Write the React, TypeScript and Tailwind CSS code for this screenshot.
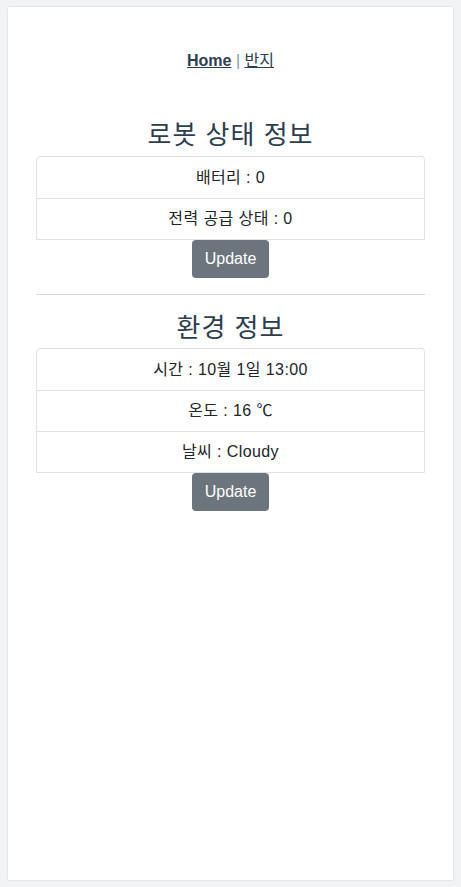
import React, { useState } from "react";

const font = { fontFamily: '"Liberation Sans", "Noto Sans CJK KR", sans-serif' };

type Row = { label: string; value: string };

const InfoTable: React.FC<{ rows: Row[] }> = ({ rows }) => (
  <ul className="border border-[#dee2e6] rounded-[4px] rounded-b-none">
    {rows.map((r, i) => (
      <li
        key={i}
        className={
          "h-[41px] flex items-center justify-center text-[16px] tracking-[0.4px] text-[#212529] " +
          (i > 0 ? "border-t border-[#dee2e6]" : "")
        }
      >
        {r.label} : {r.value}
      </li>
    ))}
  </ul>
);

const UpdateButton: React.FC<{ onClick: () => void }> = ({ onClick }) => (
  <div className="flex justify-center">
    <button
      onClick={onClick}
      className="w-[77px] h-[38px] bg-[#6c757d] text-white text-[16px] rounded-[4px]"
    >
      Update
    </button>
  </div>
);

export default function App() {
  const [robot, setRobot] = useState({ battery: 0, power: 0 });
  const [env] = useState({ time: "10월 1일 13:00", temp: "16 ℃", weather: "Cloudy" });

  return (
    <div className="min-h-screen bg-[#f2f3f4] pt-[7px] pb-[7px] px-[8px]" style={font}>
      <div className="bg-white h-[873px] w-[445px] shadow-[0_0_2px_rgba(0,0,0,0.15)] px-[28px]">
        {/* 메뉴 */}
        <nav className="pt-[42px] h-[108px] text-center text-[16px] text-[#2c3e50]">
          <a className="underline font-bold">Home</a>
          <span className="text-[#8b96a3]"> | </span>
          <a className="underline">반지</a>
        </nav>

        {/* 로봇 상태 */}
        <h2 className="text-[26px] tracking-[1px] leading-[41px] text-center text-[#2c3e50]">로봇 상태 정보</h2>
        <InfoTable
          rows={[
            { label: "배터리", value: String(robot.battery) },
            { label: "전력 공급 상태", value: String(robot.power) },
          ]}
        />
        <UpdateButton onClick={() => setRobot({ ...robot })} />

        <hr className="mt-[16px] border-t border-[#d4d6d9]" />

        {/* 환경 정보 */}
        <h2 className="mt-[13px] text-[26px] tracking-[1px] leading-[40px] text-center text-[#2c3e50]">환경 정보</h2>
        <InfoTable
          rows={[
            { label: "시간", value: env.time },
            { label: "온도", value: env.temp },
            { label: "날씨", value: env.weather },
          ]}
        />
        <UpdateButton onClick={() => {}} />
      </div>
    </div>
  );
}
